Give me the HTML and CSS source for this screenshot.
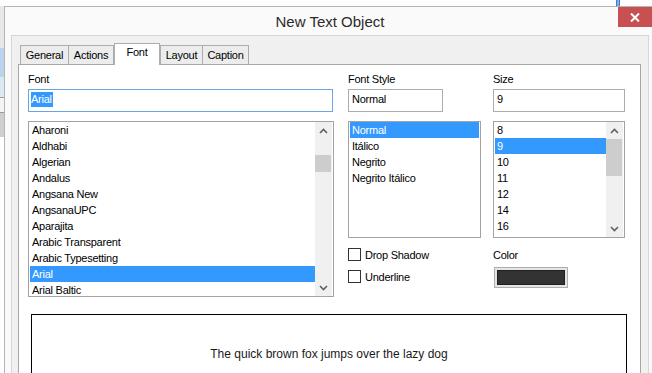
FILE: index.html
```html
<!DOCTYPE html>
<html lang="en">
<head>
  <meta charset="UTF-8" />
  <title>New Text Object</title>
  <link rel="stylesheet" href="styles.css">
</head>
<body>
<div class="screen">
  <!-- window behind the dialog -->
  <div class="topstrip"><span class="bg-mark"></span></div>
  <div class="main">
    <div class="side">
      <div class="side-a"></div>
      <div class="side-b"></div>
      <div class="side-c"></div>
      <div class="side-d"></div>
      <div class="side-e"></div>
    </div>

    <div class="dialog">
      <div class="titlebar">
        <div class="title">New Text Object</div>
        <div class="close">
          <svg width="10" height="9" viewBox="0 0 10 9"><path d="M1 0.5 L9 8.5 M9 0.5 L1 8.5" stroke="#fff" stroke-width="2" fill="none"/></svg>
        </div>
      </div>

      <div class="frame">
        <div class="client">
          <div class="tabs">
            <div class="tab tab-general">General</div>
            <div class="tab tab-actions">Actions</div>
            <div class="tab tab-font active">Font</div>
            <div class="tab tab-layout">Layout</div>
            <div class="tab tab-caption">Caption</div>
          </div>

          <div class="panel">
            <div class="fields">
              <!-- font name -->
              <div class="col col-font">
                <div class="label">Font</div>
                <div class="input focused"><span class="sel-text">Arial</span></div>
                <div class="list list-font">
                  <div class="items">
                    <div class="item">Aharoni</div>
                    <div class="item">Aldhabi</div>
                    <div class="item">Algerian</div>
                    <div class="item">Andalus</div>
                    <div class="item">Angsana New</div>
                    <div class="item">AngsanaUPC</div>
                    <div class="item">Aparajita</div>
                    <div class="item">Arabic Transparent</div>
                    <div class="item">Arabic Typesetting</div>
                    <div class="item selected">Arial</div>
                    <div class="item">Arial Baltic</div>
                  </div>
                  <div class="scrollbar">
                    <div class="arrow"><svg width="9" height="6" viewBox="0 0 9 6"><path d="M1 5 L4.5 1.5 L8 5" stroke="#606060" stroke-width="1.6" fill="none"/></svg></div>
                    <div class="track"><div class="thumb thumb-font"></div></div>
                    <div class="arrow"><svg width="9" height="6" viewBox="0 0 9 6"><path d="M1 1 L4.5 4.5 L8 1" stroke="#606060" stroke-width="1.6" fill="none"/></svg></div>
                  </div>
                </div>
              </div>

              <!-- style -->
              <div class="col col-style">
                <div class="label">Font Style</div>
                <div class="input input-style">Normal</div>
                <div class="list list-short list-style">
                  <div class="items">
                    <div class="item selected">Normal</div>
                    <div class="item">Itálico</div>
                    <div class="item">Negrito</div>
                    <div class="item">Negrito Itálico</div>
                  </div>
                </div>
                <div class="checks">
                  <div class="check"><span class="box"></span>Drop Shadow</div>
                  <div class="check"><span class="box"></span>Underline</div>
                </div>
              </div>

              <!-- size -->
              <div class="col col-size">
                <div class="label">Size</div>
                <div class="input">9</div>
                <div class="list list-short">
                  <div class="items">
                    <div class="item">8</div>
                    <div class="item selected">9</div>
                    <div class="item">10</div>
                    <div class="item">11</div>
                    <div class="item">12</div>
                    <div class="item">14</div>
                    <div class="item">16</div>
                  </div>
                  <div class="scrollbar">
                    <div class="arrow"><svg width="9" height="6" viewBox="0 0 9 6"><path d="M1 5 L4.5 1.5 L8 5" stroke="#606060" stroke-width="1.6" fill="none"/></svg></div>
                    <div class="track"><div class="thumb thumb-size"></div></div>
                    <div class="arrow"><svg width="9" height="6" viewBox="0 0 9 6"><path d="M1 1 L4.5 4.5 L8 1" stroke="#606060" stroke-width="1.6" fill="none"/></svg></div>
                  </div>
                </div>
                <div class="label label-color">Color</div>
                <div class="color-btn"><div class="swatch"></div></div>
              </div>
            </div>

            <div class="preview">The quick brown fox jumps over the lazy dog</div>
          </div>
        </div>
      </div>
    </div>
  </div>
</div>
</body>
</html>
```

FILE: styles.css
```css
* {
  box-sizing: border-box;
}

body {
  margin: 0;
  overflow: hidden;
  background: #fff;
  font-family: "Liberation Sans", Arial, sans-serif;
  color: #000;
}

.screen {
  width: 652px;
  height: 373px;
  overflow: hidden;
}

/* bits of the window behind */
.topstrip {
  height: 6px;
  display: flex;
  background: #fdfdfd;
}
.bg-mark {
  width: 4px;
  height: 6px;
  margin-left: 616px;
  background: #7fb0e0;
  border-left: 1px solid #3c7fc8;
  border-right: 1px solid #3c7fc8;
}

.main {
  display: flex;
}

.side {
  width: 4px;
  flex-shrink: 0;
  display: flex;
  flex-direction: column;
}
.side-a { height: 42px; background: #e8e8e8; }
.side-b { height: 29px; background: #bcd3ee; }
.side-c { height: 20px; background: #dde8f5; }
.side-d { height: 16px; background: #f4f4f4; border-top: 1px solid #9a9a9a; border-bottom: 1px solid #9a9a9a; }
.side-e { height: 24px; background: #cfcfcf; }

/* dialog window */
.dialog {
  width: 652px;
  flex-shrink: 0;
  border: 1px solid #b4b4b4;
  background: #fafafa;
}

.titlebar {
  height: 28px;
  display: flex;
  align-items: flex-start;
}
.title {
  flex: 1;
  padding-left: 37px;
  text-align: center;
  font-size: 15px;
  line-height: 29px;
  color: #2b2b2b;
}
.close {
  width: 34px;
  height: 20px;
  margin-right: 3px;
  background: #c75050;
  display: flex;
  align-items: center;
  justify-content: center;
}

.frame {
  display: flex;
  padding: 0 6px;
}

.client {
  flex: 1;
  height: 340px;
  background: #f0f0f0;
  border: 1px solid #d6d6d6;
  border-bottom: none;
  padding: 7px 7px 0 6px;
}

/* tabs */
.tabs {
  display: flex;
  align-items: flex-end;
  padding-left: 2px;
  height: 21px;
}
.tab {
  height: 19px;
  border: 1px solid #adadad;
  border-bottom: none;
  background: #ececec;
  font-size: 11px;
  letter-spacing: -0.25px;
  line-height: 18px;
  text-align: center;
}
.tab + .tab {
  border-left: none;
}
.tab-general { width: 49px; }
.tab-actions { width: 45px; }
.tab-font { width: 46px; }
.tab-layout { width: 43px; }
.tab-caption { width: 46px; }
.tab.active {
  position: relative;
  z-index: 1;
  height: 22px;
  margin-bottom: -1px;
  background: #fff;
  border-left: 1px solid #adadad;
  line-height: 17px;
}
.tab.active + .tab {
  border-left: 1px solid #adadad;
}

.panel {
  height: 330px;
  background: #fff;
  border: 1px solid #a7a7a7;
  padding: 7px 0 0 9px;
}

.fields {
  display: flex;
  align-items: flex-start;
}

.col {
  display: flex;
  flex-direction: column;
}
.col-font { width: 306px; }
.col-style { width: 133px; margin-left: 14px; }
.col-size { width: 132px; margin-left: 12px; }

.label {
  font-size: 11px;
  letter-spacing: -0.25px;
  line-height: 15px;
  height: 14px;
}

.input {
  margin-top: 3px;
  height: 23px;
  border: 1px solid #acacac;
  padding: 2px 3px 0;
  font-size: 11px;
  letter-spacing: -0.25px;
  line-height: 15px;
  display: flex;
  align-items: flex-start;
}
.input.focused {
  width: 305px;
  border-color: #6aa6e6;
  padding: 2px 2px 0;
}
.input-style {
  width: 95px;
}
.sel-text {
  background: #3399ff;
  color: #fff;
  line-height: 15px;
  padding-right: 1px;
}

/* list boxes */
.list {
  margin-top: 9px;
  border: 1px solid #a3a3a3;
  display: flex;
  padding: 0 1px;
  overflow: hidden;
}
.list-font { height: 176px; }
.list-short { height: 117px; }

.items {
  flex: 1;
}
.item {
  height: 16px;
  line-height: 16px;
  padding-left: 2px;
  font-size: 11px;
  letter-spacing: -0.25px;
  white-space: nowrap;
}
.item.selected {
  background: #3399ff;
  color: #fff;
}

.scrollbar {
  width: 17px;
  background: #f0f0f0;
  display: flex;
  flex-direction: column;
}
.arrow {
  height: 17px;
  display: flex;
  align-items: center;
  justify-content: center;
}
.track {
  flex: 1;
}
.thumb {
  background: #cdcdcd;
  margin: 0 1px 0 0;
}
.thumb-font { margin-top: 16px; height: 17px; }
.thumb-size { height: 37px; }

/* checkboxes */
.checks {
  margin-top: 10px;
  display: flex;
  flex-direction: column;
  gap: 9px;
}
.check {
  display: flex;
  align-items: center;
  height: 13px;
  font-size: 11px;
  letter-spacing: -0.25px;
}
.box {
  width: 13px;
  height: 13px;
  border: 1px solid #333;
  background: #fff;
  margin-right: 4px;
}

.label-color {
  margin-top: 10px;
}
.color-btn {
  margin: 5px 0 0 1px;
  width: 74px;
  height: 21px;
  border: 1px solid #adadad;
  background: #e5e5e5;
  padding: 2px;
}
.swatch {
  height: 100%;
  border: 1px solid #1f1f1f;
  background: #333;
}

/* preview */
.preview {
  margin: 17px 0 0 3px;
  width: 596px;
  height: 80px;
  border: 1px solid #000;
  display: flex;
  align-items: center;
  justify-content: center;
  font-size: 12px;
  color: #1a1a1a;
}
```
